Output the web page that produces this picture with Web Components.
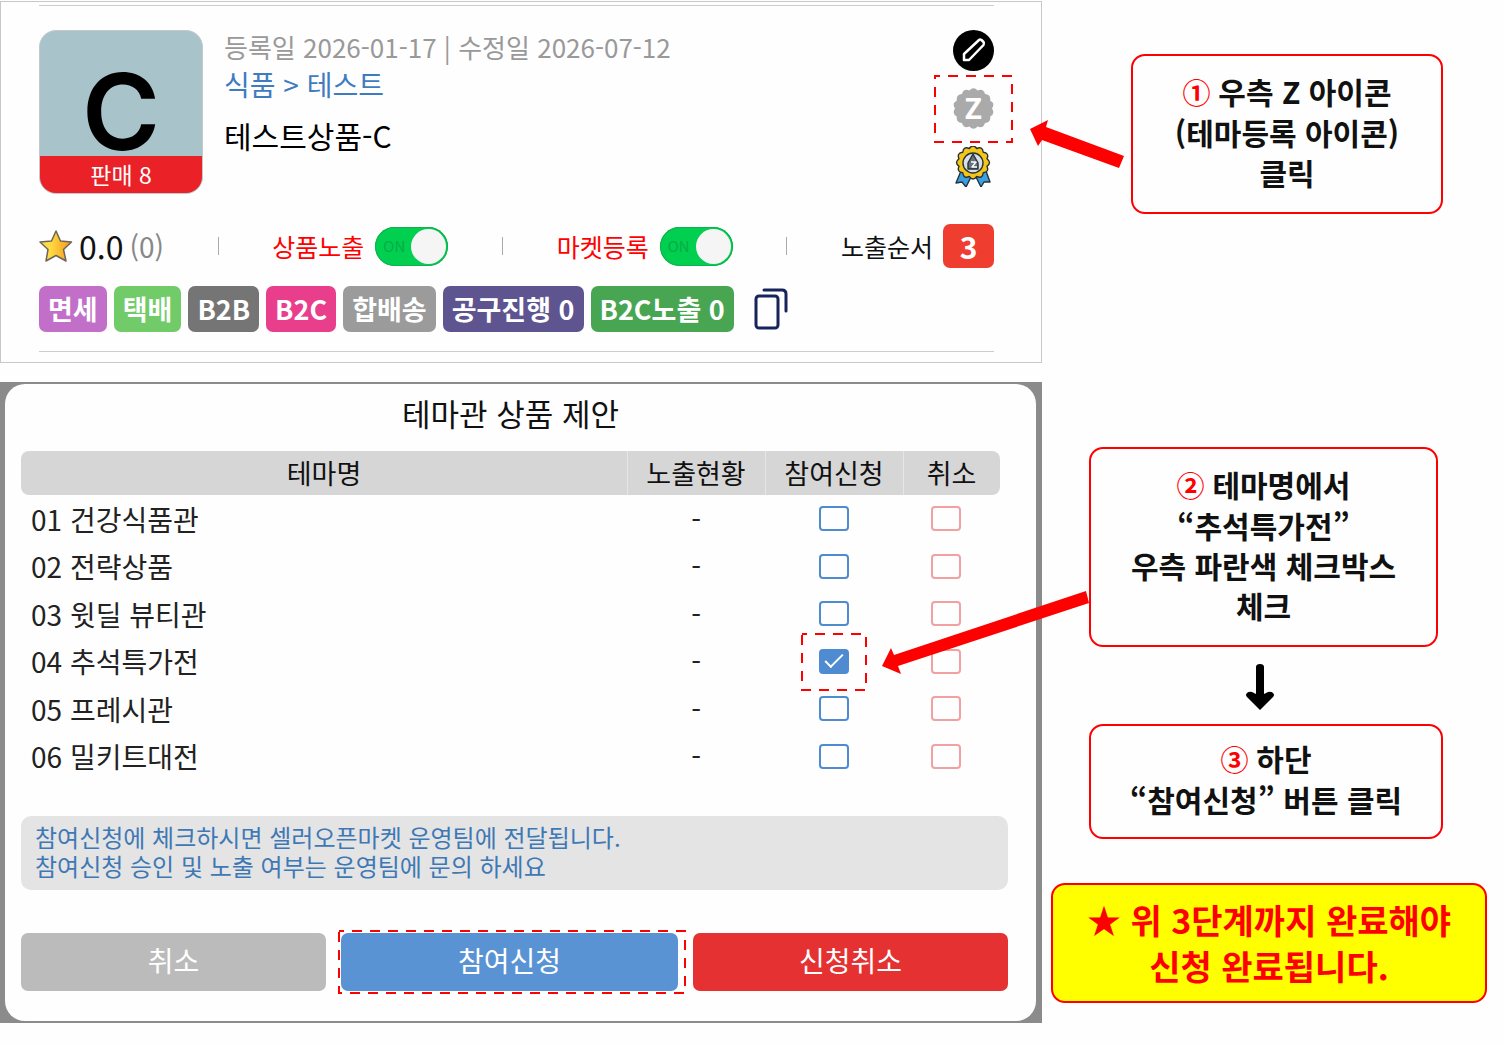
<!DOCTYPE html>
<html lang="ko">
<head>
<meta charset="utf-8">
<title>테마관 상품 제안</title>
<style>
    body {
        margin: 0;
        background: #fefefe;
        color: #111;
        font-family: "Noto Sans CJK KR", "Noto Sans", sans-serif;
    }
</style>
</head>
<body>
<guide-page>
    <product-card slot="screen"></product-card>
    <theme-dialog slot="screen"></theme-dialog>

    <step-box slot="guide" class="one">
        <step-arrow slot="arrow" kind="short"></step-arrow>
        <step-no>①</step-no> 우측 Z 아이콘<br>(테마등록 아이콘)<br>클릭
    </step-box>
    <step-box slot="guide" class="two">
        <step-arrow slot="arrow" kind="long"></step-arrow>
        <step-no>②</step-no> 테마명에서<br>“추석특가전”<br>우측 파란색 체크박스<br>체크
    </step-box>
    <down-arrow slot="guide"></down-arrow>
    <step-box slot="guide" class="three">
        <step-no>③</step-no> 하단<br>“참여신청” 버튼 클릭
    </step-box>
    <step-box slot="guide" class="final">★ 위 3단계까지 완료해야<br>신청 완료됩니다.</step-box>
</guide-page>

<script>
// outline of a round badge with n soft teeth
function scallop(cx, cy, outer, inner, n) {
    let d = "";
    for (let i = 0; i < n; i++) {
        const a = (i - 0.5) * 2 * Math.PI / n - Math.PI / 2;
        const m = a + Math.PI / n;
        const b = a + 2 * Math.PI / n;
        const p = (r, t) => (cx + r * Math.cos(t)).toFixed(2) + " " + (cy + r * Math.sin(t)).toFixed(2);
        if (i == 0) d += `M${p(inner, a)}`;
        d += `Q${p(outer, m)} ${p(inner, b)}`;
    }
    return d + "Z";
}

class GuidePage extends HTMLElement {
    connectedCallback() {
        this.attachShadow({ mode: "open" }).innerHTML = `
            <style>
                :host {
                    display: grid;
                    grid-template-columns: minmax(0, 1042fr) minmax(0, 461fr);
                }
                main {
                    display: flex;
                    flex-direction: column;
                    gap: 19px;
                    padding-top: 1px;
                }
                aside {
                    display: flex;
                    flex-direction: column;
                    padding-top: 54px;
                }
                ::slotted(.one) { margin: 0 60px 0 89px; }
                ::slotted(.two) { margin: 233px 65px 0 47px; }
                ::slotted(.three) {
                    --pad: 12px 0 18px;
                    margin: 14px 60px 0 47px;
                }
                ::slotted(.final) {
                    --pad: 12px 0;
                    --fill: #ff0;
                    margin: 44px 16px 0 9px;
                    color: #f00;
                    font-size: 34px;
                    line-height: 46px;
                }
            </style>
            <main><slot name="screen"></slot></main>
            <aside><slot name="guide"></slot></aside>
        `;
    }
}

class StepBox extends HTMLElement {
    connectedCallback() {
        this.attachShadow({ mode: "open" }).innerHTML = `
            <style>
                :host {
                    display: block;
                    position: relative;
                    padding: var(--pad, 15px 0 20px);
                    border: 2px solid #f00;
                    border-radius: 14px;
                    background: var(--fill, #fefefe);
                    font-size: 30px;
                    font-weight: 700;
                    line-height: 40px;
                    text-align: center;
                    white-space: nowrap;
                }
            </style>
            <slot name="arrow"></slot><slot></slot>
        `;
    }
}

class StepNo extends HTMLElement {
    connectedCallback() {
        this.attachShadow({ mode: "open" }).innerHTML = `
            <style>
                :host {
                    color: #f00;
                    font-size: 28px;
                }
            </style>
            <slot></slot>
        `;
    }
}

// red pointer hanging off the left side of a step box
class StepArrow extends HTMLElement {
    connectedCallback() {
        const short = this.getAttribute("kind") == "short";
        const size = short ? [94, 48] : [207, 83];
        const points = short
            ? "0,9 18,0 16,7 94,36 89,48 12,20 8,26"
            : "0,75 9,57 12,64 204,0 207,12 16,75 19,83";
        this.attachShadow({ mode: "open" }).innerHTML = `
            <style>
                :host {
                    position: absolute;
                    z-index: 2;
                    right: calc(100% + ${short ? 9 : 2}px);
                    top: ${short ? 64 : 142}px;
                }
                svg { display: block; }
            </style>
            <svg width="${size[0]}" height="${size[1]}" fill="#f00"><polygon points="${points}"/></svg>
        `;
    }
}

class DownArrow extends HTMLElement {
    connectedCallback() {
        this.attachShadow({ mode: "open" }).innerHTML = `
            <style>
                :host {
                    display: flex;
                    justify-content: center;
                    margin: 17px 25px 0 0;
                }
            </style>
            <svg width="28" height="46" fill="#000">
                <path d="M10 3Q10 0 14 0T18 3V30L22 28Q25 27 27 29T27 33L14 46L1 33Q-1 31 1 29T6 28L10 30Z"/>
            </svg>
        `;
    }
}

// dashed frame over whatever is slotted in
class FocusMark extends HTMLElement {
    connectedCallback() {
        this.attachShadow({ mode: "open" }).innerHTML = `
            <style>
                :host {
                    display: grid;
                    position: relative;
                }
                svg {
                    position: absolute;
                    inset: var(--mark-inset);
                    width: calc(100% + var(--mark-w));
                    height: calc(100% + var(--mark-h));
                    pointer-events: none;
                }
                rect {
                    x: 1px;
                    y: 1px;
                    width: calc(100% - 2px);
                    height: calc(100% - 2px);
                    fill: none;
                    stroke: #f00;
                    stroke-width: 2px;
                    stroke-dasharray: 10 8;
                    stroke-dashoffset: 5px;
                }
            </style>
            <slot></slot>
            <svg><rect/></svg>
        `;
    }
}

class OnSwitch extends HTMLElement {
    connectedCallback() {
        this.attachShadow({ mode: "open" }).innerHTML = `
            <style>
                label {
                    display: flex;
                    align-items: center;
                    gap: 11px;
                    color: #f00;
                    font-size: 25px;
                    line-height: 34px;
                }
                .track {
                    display: grid;
                    position: relative;
                    align-items: center;
                }
                .track > * { grid-area: 1 / 1; }
                input {
                    appearance: none;
                    box-sizing: border-box;
                    width: 73px;
                    height: 39px;
                    margin: 0;
                    padding: 2px;
                    border-radius: 20px;
                    background: #00cf50;
                    box-shadow: inset 0 0 0 1px #10b050;
                }
                input::before {
                    content: "";
                    display: block;
                    width: 35px;
                    height: 35px;
                    margin-left: auto;
                    border-radius: 50%;
                    background: #f5f5f5;
                }
                .track span {
                    padding-left: 8px;
                    color: #08ac46;
                    font-size: 15px;
                    pointer-events: none;
                }
            </style>
            <label><slot></slot><span class="track"><input type="checkbox" role="switch" checked><span>ON</span></span></label>
        `;
    }
}

class ProductTag extends HTMLElement {
    connectedCallback() {
        this.attachShadow({ mode: "open" }).innerHTML = `
            <style>
                :host {
                    padding: 0 9px;
                    border-radius: 7px;
                    background: ${this.getAttribute("color")};
                    color: #fff;
                    font-size: 27px;
                    font-weight: 700;
                    line-height: 46px;
                }
            </style>
            <slot></slot>
        `;
    }
}

class ProductCard extends HTMLElement {
    connectedCallback() {
        this.attachShadow({ mode: "open" }).innerHTML = `
            <style>
                :host {
                    display: block;
                    padding: 3px 47px 10px 38px;
                    border: 1px solid #c8c8c8;
                }
                .lines {
                    border: solid #ccc;
                    border-width: 1px 0;
                }
                .top {
                    display: flex;
                    gap: 21px;
                    padding-top: 24px;
                }
                .thumb {
                    display: flex;
                    flex-direction: column;
                    box-sizing: border-box;
                    width: 164px;
                    height: 164px;
                    border: 1px solid #c4c8ca;
                    border-radius: 17px;
                    background: #a9c3ca;
                    overflow: hidden;
                    text-align: center;
                }
                .thumb b {
                    flex: 1;
                    padding-top: 36px;
                    color: #000;
                    font: 600 106px/89px Inter, sans-serif;
                }
                .thumb span {
                    background: #ea2227;
                    color: #fff;
                    font-size: 23px;
                    line-height: 37px;
                }
                .info { flex: 1; }
                .dates {
                    color: #999;
                    font-size: 26px;
                    line-height: 34px;
                }
                .path {
                    color: #3f7cbf;
                    font-size: 28px;
                    line-height: 40px;
                }
                a {
                    color: inherit;
                    text-decoration: none;
                }
                h2 {
                    margin: 10px 0 0;
                    color: #000;
                    font-size: 30px;
                    font-weight: 400;
                    line-height: 42px;
                }
                .icons {
                    display: flex;
                    flex-direction: column;
                    gap: 17px;
                    height: 164px;
                }
                focus-mark {
                    --mark-inset: -13px -19px;
                    --mark-w: 38px;
                    --mark-h: 27px;
                }
                button {
                    display: block;
                    padding: 0;
                    border: 0;
                    background: none;
                }
                svg { display: block; }
                .stats {
                    display: flex;
                    align-items: center;
                    justify-content: space-between;
                    padding-top: 30px;
                }
                .stats i {
                    width: 1px;
                    height: 18px;
                    background: #aaa;
                }
                .rating, .order {
                    display: flex;
                    align-items: center;
                }
                .rating strong {
                    margin: 0 6px;
                    font-size: 32px;
                    font-weight: 400;
                    line-height: 44px;
                }
                .rating span {
                    color: #888;
                    font-size: 28px;
                    line-height: 44px;
                }
                .order {
                    gap: 10px;
                    font-size: 25px;
                }
                .order b {
                    width: 51px;
                    border-radius: 7px;
                    background: #ef3e30;
                    color: #fff;
                    font-size: 30px;
                    font-weight: 700;
                    line-height: 44px;
                    text-align: center;
                }
                .tags {
                    display: flex;
                    align-items: center;
                    gap: 7px;
                    padding: 18px 0 19px;
                    white-space: nowrap;
                }
                .tags button { margin-left: 13px; }
            </style>
            <div class="lines">
                <div class="top">
                    <div class="thumb"><b>C</b><span>판매 8</span></div>
                    <div class="info">
                        <div class="dates">등록일 2026-01-17 | 수정일 2026-07-12</div>
                        <div class="path"><a href="#food">식품</a> &gt; <a href="#test">테스트</a></div>
                        <h2>테스트상품-C</h2>
                    </div>
                    <div class="icons">
                        <button aria-label="수정">
                            <svg width="41" height="41">
                                <circle cx="20.5" cy="20.5" r="20.5" fill="#000"/>
                                <path d="M11 30V24L26 10Q27 9 28.500 10L30.500 12Q31.500 13.500 30.500 15L16 30Z" fill="none" stroke="#fff" stroke-width="2.500" stroke-linejoin="round"/>
                            </svg>
                        </button>
                        <focus-mark>
                            <button aria-label="테마등록">
                                <svg width="41" height="41">
                                    <path d="${scallop(20.5, 20.5, 22.5, 18.5, 14)}" fill="#aaa"/>
                                    <text x="20.5" y="31" fill="#fff" text-anchor="middle" font-family="Open Sans" font-size="29" font-weight="700">Z</text>
                                </svg>
                            </button>
                        </focus-mark>
                        <button aria-label="인증">
                            <svg width="41" height="41" stroke="#263238" stroke-width="1.400" stroke-linejoin="round">
                                <path d="M8 25L3 37L9 36L13 41L19 29ZM33 25L37 36L31 36L28 41L22 29Z" fill="#3b9fe0"/>
                                <path d="${scallop(20, 16.5, 19, 14.5, 12)}" fill="#f5c518"/>
                                <circle cx="20" cy="17" r="10" fill="#d8dfe6"/>
                                <path d="M15 23V17L20 8L25 17V23Z" fill="#66707e"/>
                                <path d="M18 16H23L19 21H24" fill="none" stroke="#fff"/>
                            </svg>
                        </button>
                    </div>
                </div>
                <div class="stats">
                    <div class="rating">
                        <svg width="34" height="34">
                            <defs><linearGradient id="gold"><stop offset="0.300" stop-color="#ffdc45"/><stop offset="1" stop-color="#f79a17"/></linearGradient></defs>
                            <path d="M17 2L21.500 12L32.500 13L24.500 20.500L27 32L17 26.500L7 32L9 20.500L1 13L12.500 12Z" fill="url(#gold)" stroke="#6b6659" stroke-width="1.500" stroke-linejoin="round"/>
                        </svg>
                        <strong>0.0</strong><span>(0)</span>
                    </div>
                    <i></i>
                    <on-switch>상품노출</on-switch>
                    <i></i>
                    <on-switch>마켓등록</on-switch>
                    <i></i>
                    <div class="order">노출순서<b>3</b></div>
                </div>
                <div class="tags">
                    <product-tag color="#c16fc9">면세</product-tag>
                    <product-tag color="#70cb68">택배</product-tag>
                    <product-tag color="#757575">B2B</product-tag>
                    <product-tag color="#e83e8c">B2C</product-tag>
                    <product-tag color="#9b9b9b">합배송</product-tag>
                    <product-tag color="#5e5490">공구진행 0</product-tag>
                    <product-tag color="#48a653">B2C노출 0</product-tag>
                    <button aria-label="복사">
                        <svg width="34" height="42" fill="none" stroke="#17245c" stroke-width="3" stroke-linecap="round">
                            <rect x="2" y="8" width="22" height="32" rx="3"/>
                            <path d="M10 2H28Q32 2 32 6V23"/>
                        </svg>
                    </button>
                </div>
            </div>
        `;
    }
}

class ThemeDialog extends HTMLElement {
    connectedCallback() {
        this.inner = this.attachShadow({ mode: "open" });
        this.themes = ["01 건강식품관", "02 전략상품", "03 윗딜 뷰티관", "04 추석특가전", "05 프레시관", "06 밀키트대전"];
        this.Update();
    }

    Update() {
        this.inner.innerHTML = `
            <style>
                :host {
                    display: block;
                    padding: 2px 6px 2px 5px;
                    background: #8b8b8b;
                }
                section {
                    padding: 7px 28px 30px 16px;
                    border-radius: 20px;
                    background: #fefefe;
                }
                h1 {
                    width: calc(100% - 8px);
                    margin: 0 0 16px;
                    font-size: 31px;
                    font-weight: 400;
                    line-height: 44px;
                    text-align: center;
                }
                table {
                    width: calc(100% - 8px);
                    border-collapse: separate;
                    border-spacing: 0;
                    table-layout: fixed;
                }
                col:nth-child(2), col:nth-child(3) { width: 138px; }
                col:nth-child(4) { width: 97px; }
                th {
                    height: 44px;
                    padding: 0;
                    background: #d6d6d6;
                    font-size: 27px;
                    font-weight: 400;
                    line-height: 40px;
                }
                th + th { box-shadow: inset 1px 0 #e6e6e6; }
                th:first-child { border-radius: 8px 0 0 8px; }
                th:last-child { border-radius: 0 8px 8px 0; }
                td {
                    height: 47px;
                    padding: 0;
                    color: #222;
                    font-size: 28px;
                    line-height: 40px;
                    text-align: center;
                }
                tr:nth-child(even) td { height: 48px; }
                td:first-child {
                    padding-left: 10px;
                    text-align: left;
                }
                td:last-child { padding-right: 12px; }
                input {
                    appearance: none;
                    box-sizing: border-box;
                    display: block;
                    width: 30px;
                    height: 25px;
                    margin: 0 auto;
                    border: 2px solid #4f8bd0;
                    border-radius: 4px;
                }
                td:last-child input { border-color: #f2a0a2; }
                input:checked { background: #4f8bd0; }
                input:checked::before {
                    content: "";
                    display: block;
                    width: 16px;
                    height: 7px;
                    margin: 3px auto;
                    border: solid #fff;
                    border-width: 0 0 2px 2px;
                    transform: rotate(-45deg);
                }
                focus-mark {
                    width: 30px;
                    margin: 0 auto;
                    --mark-inset: -16px -18px;
                    --mark-w: 36px;
                    --mark-h: 33px;
                }
                p {
                    margin: 36px 0 43px;
                    padding: 6px 14px 10px;
                    border-radius: 10px;
                    background: #e4e4e4;
                    color: #3e78b5;
                    font-size: 24px;
                    line-height: 29px;
                }
                footer {
                    display: grid;
                    grid-template-columns: 305fr 337fr 315fr;
                    gap: 15px;
                }
                footer focus-mark {
                    width: auto;
                    margin: 0;
                    --mark-inset: -3px -8px -3px -3px;
                    --mark-w: 11px;
                    --mark-h: 6px;
                }
                button {
                    height: 58px;
                    padding: 0 0 4px;
                    border: 0;
                    border-radius: 7px;
                    background: #bbb;
                    color: #fff;
                    font: inherit;
                    font-size: 28px;
                }
                .apply { background: #5a93d4; }
                .revoke { background: #e53131; }
            </style>
            <section>
                <h1>테마관 상품 제안</h1>
                <table>
                    <colgroup><col><col><col><col></colgroup>
                    <thead>
                        <tr><th>테마명</th><th>노출현황</th><th id="join">참여신청</th><th id="cancel">취소</th></tr>
                    </thead>
                    <tbody></tbody>
                </table>
                <p>참여신청에 체크하시면 셀러오픈마켓 운영팀에 전달됩니다.<br>참여신청 승인 및 노출 여부는 운영팀에 문의 하세요</p>
                <footer>
                    <button>취소</button>
                    <focus-mark><button class="apply">참여신청</button></focus-mark>
                    <button class="revoke">신청취소</button>
                </footer>
            </section>
        `;
        const body = this.inner.querySelector("tbody");
        this.themes.forEach((name, i) => {
            const picked = i == 3;
            const join = `<input type="checkbox" aria-labelledby="t${i} join" ${picked ? "checked" : ""}>`;
            let row = document.createElement("tr");
            row.innerHTML = `
                <td id="t${i}">${name}</td>
                <td>-</td>
                <td>${picked ? `<focus-mark>${join}</focus-mark>` : join}</td>
                <td><input type="checkbox" aria-labelledby="t${i} cancel"></td>
            `;
            body.appendChild(row);
        });
    }
}

customElements.define("focus-mark", FocusMark);
customElements.define("on-switch", OnSwitch);
customElements.define("product-tag", ProductTag);
customElements.define("product-card", ProductCard);
customElements.define("theme-dialog", ThemeDialog);
customElements.define("step-no", StepNo);
customElements.define("step-arrow", StepArrow);
customElements.define("down-arrow", DownArrow);
customElements.define("step-box", StepBox);
customElements.define("guide-page", GuidePage);
</script>
</body>
</html>
